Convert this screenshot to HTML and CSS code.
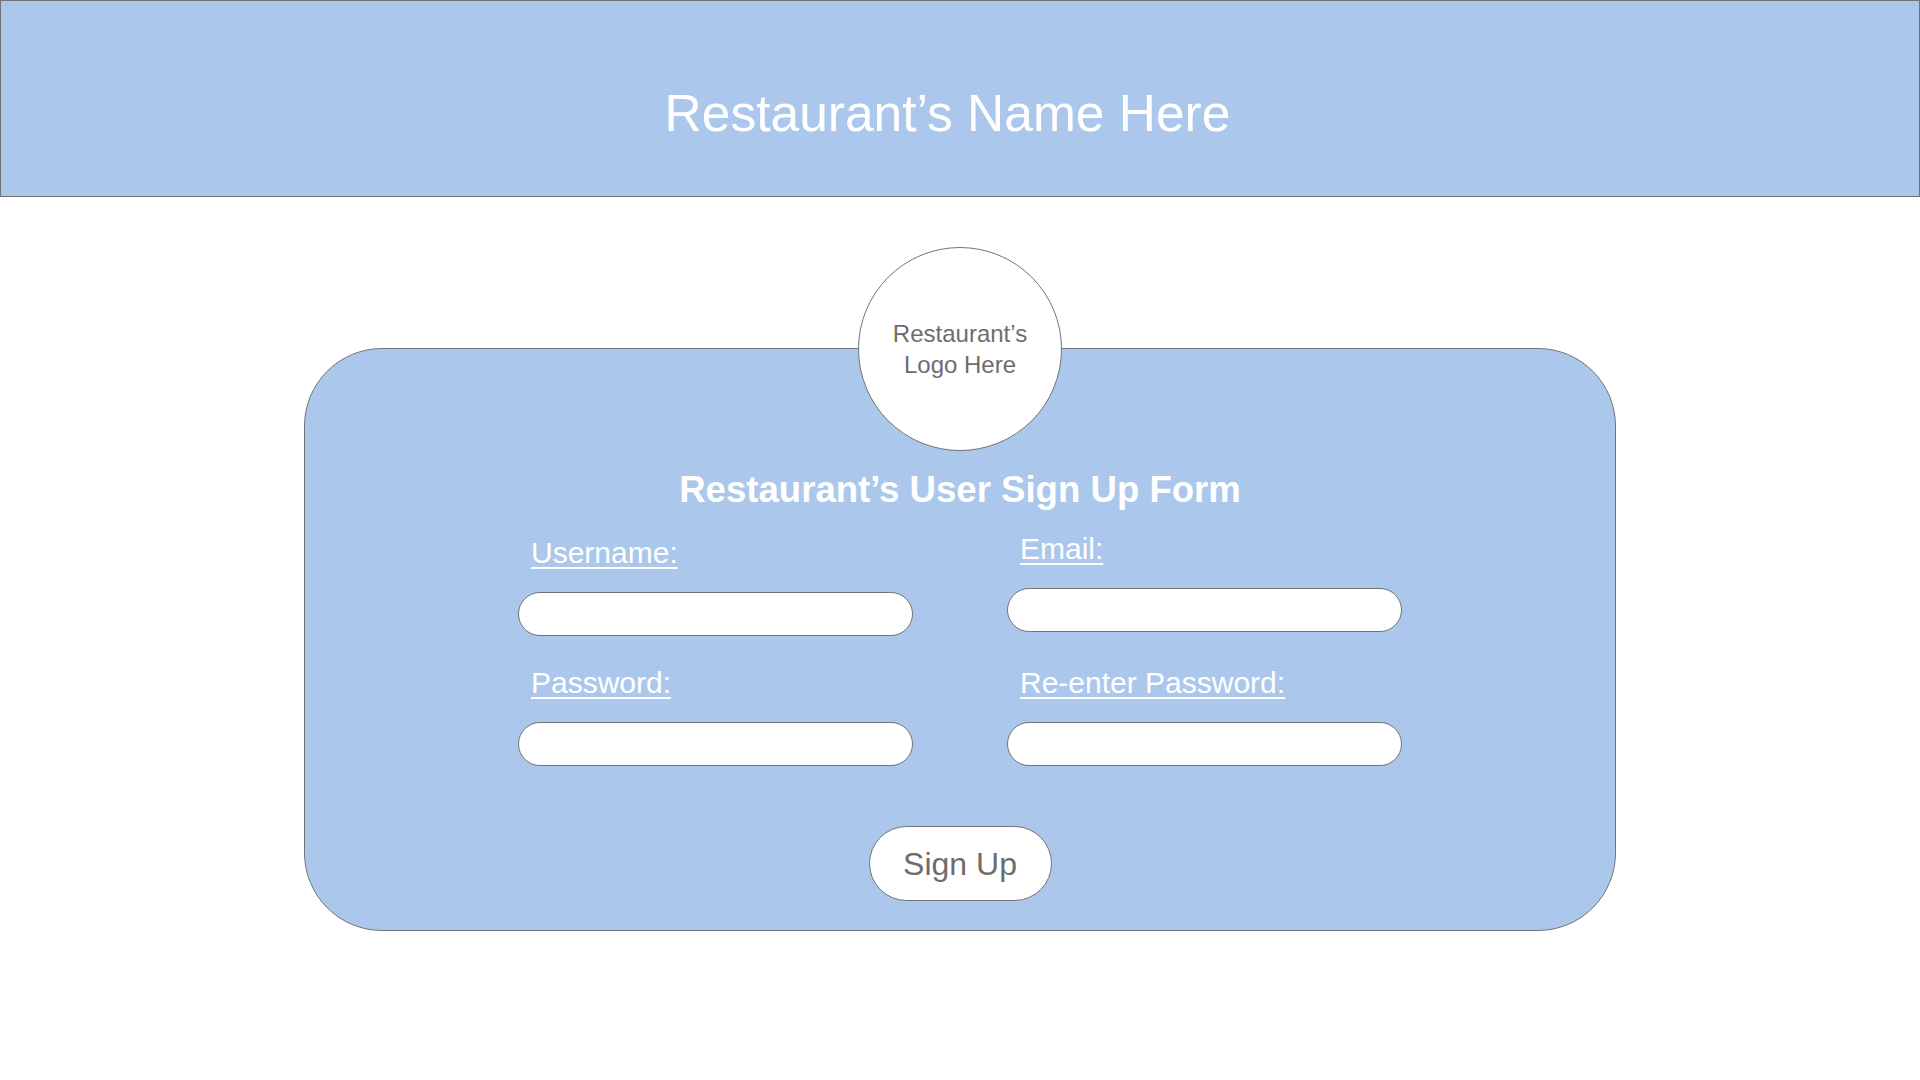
FILE: index.html
```html
<!DOCTYPE html>
<html lang="en">
<head>
<meta charset="utf-8">
<title>Restaurant Sign Up</title>
<link rel="stylesheet" href="styles.css">
</head>
<body>
<header class="site-header">
  <h1 class="site-title">Restaurant’s Name Here</h1>
</header>
<main class="page">
  <section class="card">
    <div class="logo">
      <span class="logo-text">Restaurant’s<br>Logo Here</span>
    </div>
    <h2 class="form-title">Restaurant’s User Sign Up Form</h2>
    <form class="form-grid">
      <div class="field">
        <label class="field-label" for="username">Username:</label>
        <input class="field-input" id="username" type="text">
      </div>
      <div class="field field-raised">
        <label class="field-label" for="email">Email:</label>
        <input class="field-input" id="email" type="email">
      </div>
      <div class="field">
        <label class="field-label" for="password">Password:</label>
        <input class="field-input" id="password" type="password">
      </div>
      <div class="field">
        <label class="field-label" for="password2">Re-enter Password:</label>
        <input class="field-input" id="password2" type="password">
      </div>
    </form>
    <button class="signup-btn" type="button">Sign Up</button>
  </section>
</main>
</body>
</html>
```
FILE: styles.css
```css
* { box-sizing: border-box; }

html, body {
  margin: 0;
  padding: 0;
  background: #ffffff;
  font-family: "Liberation Sans", Arial, Helvetica, sans-serif;
}

.site-header {
  height: 197px;
  background: #abc8ec;
  border: 1px solid #737373;
  padding-top: 86px;
  padding-right: 25px;
}

.site-title {
  margin: 0;
  font-size: 51.5px;
  line-height: 52px;
  font-weight: normal;
  color: #ffffff;
  text-align: center;
}

.page {
  display: flex;
  justify-content: center;
  padding-top: 151px;
}

.card {
  width: 1312px;
  height: 583px;
  background: #abc8ec;
  border: 1px solid #737373;
  border-radius: 78px;
  display: flex;
  flex-direction: column;
  align-items: center;
}

.logo {
  width: 204px;
  height: 204px;
  margin-top: -102px;
  border-radius: 50%;
  background: #ffffff;
  border: 1px solid #737373;
  display: flex;
  align-items: center;
  justify-content: center;
}

.logo-text {
  font-size: 24px;
  line-height: 31px;
  color: #6d6d6d;
  text-align: center;
}

.form-title {
  margin: 21px 0 0;
  font-size: 36.6px;
  line-height: 36px;
  font-weight: bold;
  color: #ffffff;
}

.form-grid {
  margin-top: 30px;
  display: grid;
  grid-template-columns: 395px 395px;
  column-gap: 94px;
  row-gap: 32px;
  align-items: start;
}

.field {
  display: flex;
  flex-direction: column;
}

.field-raised {
  margin-top: -4px;
}

.field-label {
  padding-left: 13px;
  font-size: 30px;
  line-height: 30px;
  color: #ffffff;
  text-decoration: underline;
  text-decoration-thickness: 2px;
  text-underline-offset: 4px;
}

.field-input {
  margin-top: 24px;
  width: 395px;
  height: 44px;
  border: 1px solid #737373;
  border-radius: 22px;
  background: #ffffff;
  outline: none;
  padding: 0 20px;
  font-family: inherit;
  font-size: 20px;
}

.signup-btn {
  margin-top: 60px;
  width: 183px;
  height: 75px;
  border: 1px solid #737373;
  border-radius: 38px;
  background: #ffffff;
  color: #6d6d6d;
  font-family: inherit;
  font-size: 32px;
  line-height: 32px;
  padding: 0;
  cursor: pointer;
}
```
